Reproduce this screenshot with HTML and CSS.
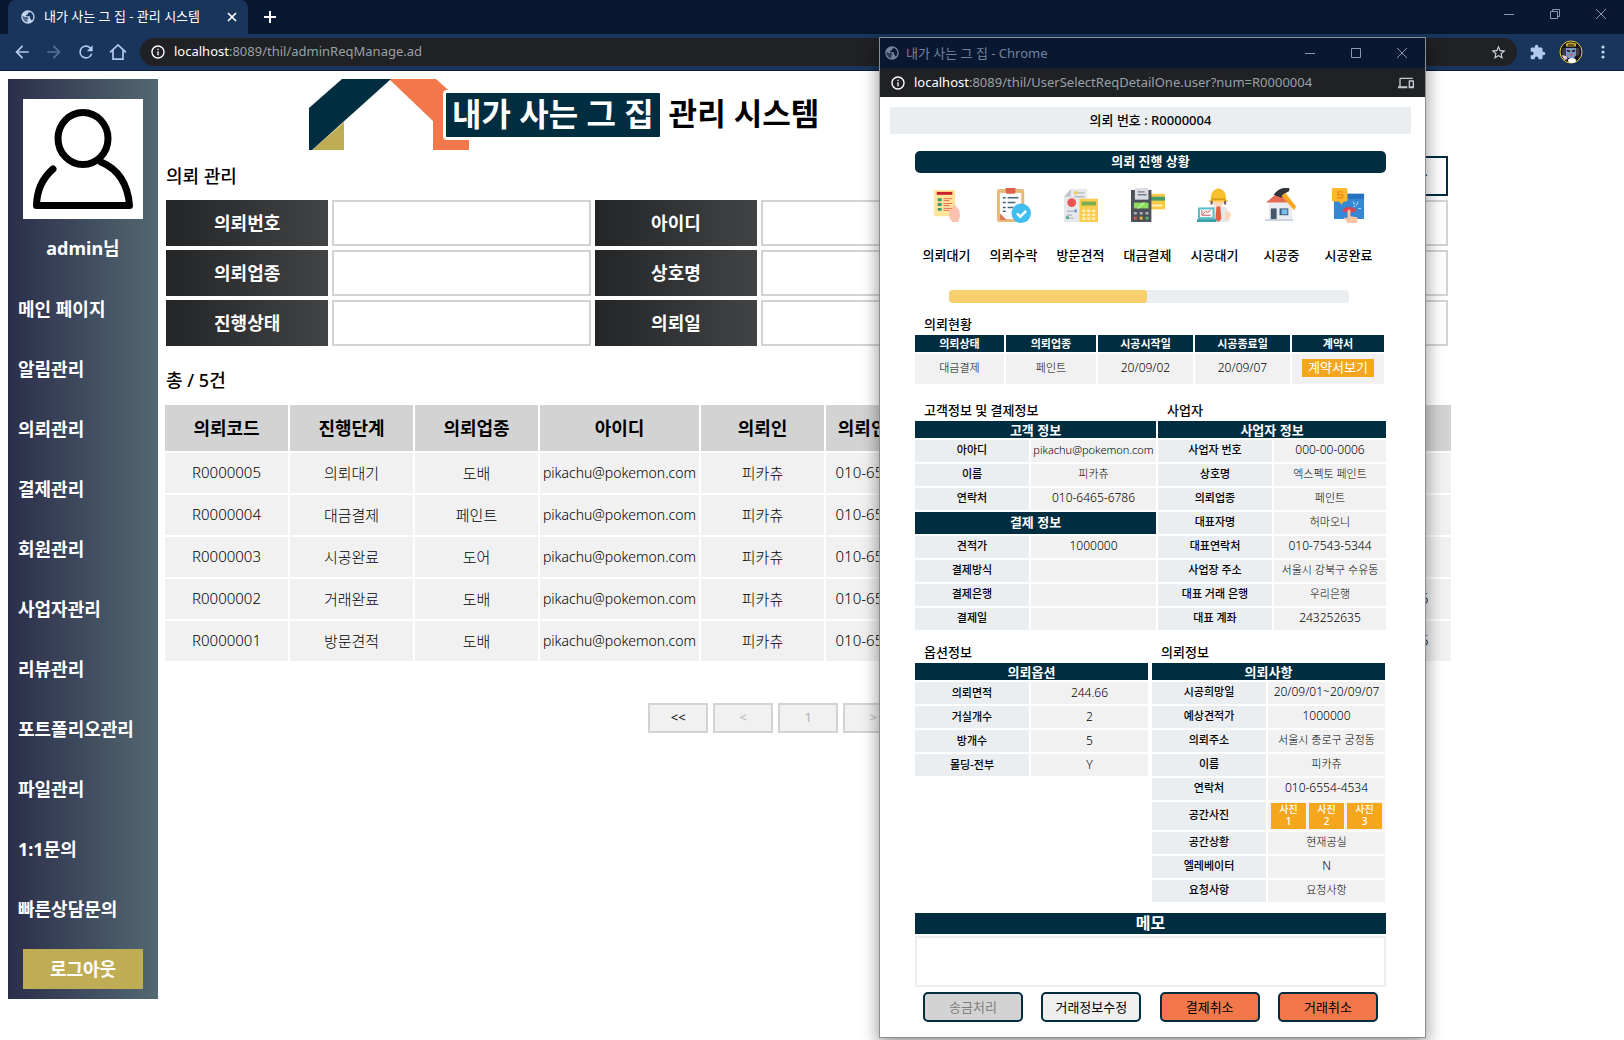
FILE: index.html
```html
<!DOCTYPE html>
<html lang="ko">
<head>
<meta charset="utf-8">
<title>내가 사는 그 집 - 관리 시스템</title>
<link rel="stylesheet" href="styles.css">
</head>
<body>
<svg class="defs" aria-hidden="true">
  <symbol id="globe" viewBox="0 0 24 24"><path d="M12 2C6.48 2 2 6.48 2 12s4.48 10 10 10 10-4.48 10-10S17.52 2 12 2zm-1 17.93c-3.95-.49-7-3.85-7-7.93 0-.62.08-1.21.21-1.79L7 12h4l2 2-2 2v3.93zm6.9-2.54L15 14v-3H9V9l3-1V6l3-1.4c2.93 1.19 5 4.06 5 7.4 0 2.08-.8 3.97-2.1 5.39z"/><path d="M4 9l3 3h5l2 3-3 5C6 20 3 16 4 9z" opacity=".35"/></symbol>
  <symbol id="info" viewBox="0 0 24 24"><path d="M11 17h2v-6h-2v6zm1-15C6.48 2 2 6.48 2 12s4.48 10 10 10 10-4.48 10-10S17.52 2 12 2zm0 18a8 8 0 1 1 0-16 8 8 0 0 1 0 16zM11 9h2V7h-2v2z"/></symbol>
</svg>

<header class="browser">
  <div class="tabstrip">
    <div class="tab">
      <svg class="tab-icon"><use href="#globe"/></svg>
      <span class="tab-title">내가 사는 그 집 - 관리 시스템</span>
      <button class="icon-btn tab-close" aria-label="탭 닫기"><svg width="10" height="10" viewBox="0 0 10 10"><path d="M1 1l8 8M9 1L1 9" stroke="#fff" stroke-width="1.7"/></svg></button>
    </div>
    <button class="icon-btn" aria-label="새 탭"><svg width="12" height="12" viewBox="0 0 12 12"><path d="M6 0v12M0 6h12" stroke="#fff" stroke-width="2"/></svg></button>
    <div class="win-controls main-controls">
      <button class="icon-btn" aria-label="최소화"><svg width="10" height="10" viewBox="0 0 10 10"><path d="M0 5.500h10"/></svg></button>
      <button class="icon-btn" aria-label="이전 크기로"><svg width="10" height="10" viewBox="0 0 10 10"><path d="M.5 2.500h7v7h-7zM2.500 2.500v-2h7v7h-2"/></svg></button>
      <button class="icon-btn" aria-label="닫기"><svg width="10" height="10" viewBox="0 0 10 10"><path d="M0 0l10 10M10 0L0 10"/></svg></button>
    </div>
  </div>
  <div class="toolbar">
    <button class="icon-btn nav" aria-label="뒤로"><svg viewBox="0 0 24 24"><path d="M20 11H7.830l5.590-5.590L12 4l-8 8 8 8 1.410-1.410L7.830 13H20v-2z"/></svg></button>
    <button class="icon-btn nav off" aria-label="앞으로" disabled><svg viewBox="0 0 24 24"><path d="M4 11h12.170l-5.590-5.590L12 4l8 8-8 8-1.410-1.410L16.170 13H4v-2z"/></svg></button>
    <button class="icon-btn nav" aria-label="새로고침"><svg viewBox="0 0 24 24"><path d="M17.650 6.350A7.960 7.960 0 0 0 12 4a8 8 0 1 0 7.730 10h-2.080A6 6 0 1 1 12 6c1.660 0 3.140.69 4.220 1.780L13 11h7V4l-2.350 2.350z"/></svg></button>
    <button class="icon-btn nav" aria-label="홈"><svg viewBox="0 0 24 24"><path d="M2.500 12.500L12 3.500l9.500 9M6 10v10.500h12V10" fill="none" stroke="#b4c9ee" stroke-width="2"/></svg></button>
    <div class="omnibox">
      <svg class="info"><use href="#info"/></svg>
      <span class="url"><b>localhost</b>:8089/thil/adminReqManage.ad</span>
      <button class="icon-btn star" aria-label="북마크"><svg width="17" height="17" viewBox="0 0 24 24"><path d="M22 9.240l-7.190-.62L12 2 9.190 8.630 2 9.240l5.460 4.730L5.820 21 12 17.270 18.180 21l-1.630-7.030L22 9.240zM12 15.400l-3.760 2.270 1-4.280-3.320-2.880 4.380-.38L12 6.100l1.710 4.040 4.380.38-3.320 2.880 1 4.280L12 15.400z"/></svg></button>
    </div>
    <button class="icon-btn ext" aria-label="확장 프로그램"><svg width="16" height="16" viewBox="1 0 23 23"><path d="M20.500 11H19V7c0-1.100-.9-2-2-2h-4V3.500a2.500 2.500 0 0 0-5 0V5H4c-1.100 0-2 .9-2 2v3.800h1.500c1.490 0 2.700 1.210 2.700 2.700s-1.210 2.700-2.700 2.700H2V20c0 1.100.9 2 2 2h3.800v-1.500c0-1.490 1.210-2.700 2.700-2.700s2.700 1.210 2.700 2.700V22H17c1.100 0 2-.9 2-2v-4h1.500a2.500 2.500 0 0 0 0-5z"/></svg></button>
    <button class="icon-btn" aria-label="프로필"><svg width="24" height="24" viewBox="0 0 24 24"><circle cx="12" cy="12" r="11" fill="#14141c" stroke="#e6cf3c" stroke-width="1"/><path d="M7 3.500q5-2 10 0v3H7z" fill="#c9a82a"/><path d="M9 5h6" stroke="#4a3c14" stroke-width="1.500"/><path d="M7 8h10l1 6-3 4H9l-3-4z" fill="#7c97bd"/><path d="M4 8q-2 5 1 8l2-1V8zM20 8q2 5-1 8l-2-1V8z" fill="#3a3c46"/><path d="M8 10.500l3 1M16 10.500l-3 1" stroke="#14141c" stroke-width="1.500"/><path d="M10 14h4l-2 2z" fill="#c8506a"/><path d="M2.500 15l5 1 1 3-3 1z" fill="#e8c8c8"/><ellipse cx="13" cy="20.500" rx="4" ry="2.500" fill="#fff"/></svg></button>
    <button class="icon-btn menu" aria-label="메뉴"><svg width="4" height="14" viewBox="0 0 4 14"><circle cx="2" cy="2" r="1.600"/><circle cx="2" cy="7" r="1.600"/><circle cx="2" cy="12" r="1.600"/></svg></button>
  </div>
</header>

<div class="page">
  <nav class="sidebar">
    <div class="photo"><svg viewBox="0 0 120 120"><g fill="none" stroke="#000" stroke-width="7" stroke-linecap="round" stroke-linejoin="round"><ellipse cx="60" cy="39.500" rx="25" ry="26"/><path d="M30 70Q14 84 13.500 106.500h93Q104 74 78 63"/></g></svg></div>
    <p class="admin">admin님</p>
    <ul>
      <li><a href="#">메인 페이지</a></li>
      <li><a href="#">알림관리</a></li>
      <li><a href="#">의뢰관리</a></li>
      <li><a href="#">결제관리</a></li>
      <li><a href="#">회원관리</a></li>
      <li><a href="#">사업자관리</a></li>
      <li><a href="#">리뷰관리</a></li>
      <li><a href="#">포트폴리오관리</a></li>
      <li><a href="#">파일관리</a></li>
      <li><a href="#">1:1문의</a></li>
      <li><a href="#">빠른상담문의</a></li>
    </ul>
    <button class="logout">로그아웃</button>
  </nav>

  <main class="main">
    <div class="logo">
      <svg width="160" height="71" viewBox="0 0 160 71"><path d="M3 71L35 43v28z" fill="#bfad55"/><path d="M80 0h47l21 19v52h-24V42z" fill="#f2784b"/><path d="M124 60h36v11h-36z" fill="#f2784b"/><path d="M0 29L33 0h49L3 71H0z" fill="#002d40"/></svg>
      <span class="logo-name">내가 사는 그 집</span>
      <span class="logo-sub">관리 시스템</span>
    </div>
    <div class="head">
      <h2>의뢰 관리</h2>
      <button class="reset">초기화</button>
    </div>
    <form class="search">
      <label for="s1">의뢰번호</label><input id="s1" type="text">
      <label for="s2">아이디</label><input id="s2" type="text">
      <label for="s3"></label><input id="s3" type="text">
      <label for="s4">의뢰업종</label><input id="s4" type="text">
      <label for="s5">상호명</label><input id="s5" type="text">
      <label for="s6"></label><input id="s6" type="text">
      <label for="s7">진행상태</label><input id="s7" type="text">
      <label for="s8">의뢰일</label><input id="s8" type="text">
      <label for="s9"></label><input id="s9" type="text">
    </form>
    <h2 class="count">총 / 5건</h2>
    <table class="list">
      <colgroup><col class="c"><col class="c"><col class="c"><col class="mail"><col class="c"><col class="c"><col><col><col><col></colgroup>
      <thead><tr><th>의뢰코드</th><th>진행단계</th><th>의뢰업종</th><th>아이디</th><th>의뢰인</th><th>의뢰인연락처</th><th></th><th></th><th></th><th></th></tr></thead>
      <tbody>
        <tr><td>R0000005</td><td>의뢰대기</td><td>도배</td><td class="mail">pikachu@pokemon.com</td><td>피카츄</td><td>010-6554-4534</td><td></td><td></td><td></td><td></td></tr>
        <tr><td>R0000004</td><td>대금결제</td><td>페인트</td><td class="mail">pikachu@pokemon.com</td><td>피카츄</td><td>010-6554-4534</td><td></td><td></td><td></td><td></td></tr>
        <tr><td>R0000003</td><td>시공완료</td><td>도어</td><td class="mail">pikachu@pokemon.com</td><td>피카츄</td><td>010-6554-4534</td><td></td><td></td><td></td><td></td></tr>
        <tr><td>R0000002</td><td>거래완료</td><td>도배</td><td class="mail">pikachu@pokemon.com</td><td>피카츄</td><td>010-6554-4534</td><td></td><td></td><td></td><td>2020-08-25</td></tr>
        <tr><td>R0000001</td><td>방문견적</td><td>도배</td><td class="mail">pikachu@pokemon.com</td><td>피카츄</td><td>010-6554-4534</td><td></td><td></td><td></td><td>2020-08-25</td></tr>
      </tbody>
    </table>
    <div class="pager">
      <button>&lt;&lt;</button><button disabled>&lt;</button><button disabled>1</button><button disabled>&gt;</button><button>&gt;&gt;</button>
    </div>
  </main>
</div>

<section class="popup">
  <div class="pop-title">
    <svg class="tab-icon"><use href="#globe"/></svg>
    <span>내가 사는 그 집 - Chrome</span>
    <div class="win-controls pop-controls">
      <button class="icon-btn" aria-label="최소화"><svg width="10" height="10" viewBox="0 0 10 10"><path d="M0 5.500h10"/></svg></button>
      <button class="icon-btn" aria-label="최대화"><svg width="10" height="10" viewBox="0 0 10 10"><path d="M.5.5h9v9h-9z"/></svg></button>
      <button class="icon-btn" aria-label="닫기"><svg width="10" height="10" viewBox="0 0 10 10"><path d="M0 0l10 10M10 0L0 10"/></svg></button>
    </div>
  </div>
  <div class="pop-url">
    <svg class="info"><use href="#info"/></svg>
    <span class="url"><b>localhost</b>:8089/thil/UserSelectReqDetailOne.user?num=R0000004</span>
    <svg class="devices" viewBox="0 0 24 24"><path d="M4 6h18V4H4c-1.100 0-2 .9-2 2v11H0v3h14v-3H4V6zm19 2h-6c-.55 0-1 .45-1 1v10c0 .55.45 1 1 1h6c.55 0 1-.45 1-1V9c0-.55-.45-1-1-1zm-1 9h-4v-7h4v7z"/></svg>
  </div>
  <div class="pop-body">
    <h1>의뢰 번호 : R0000004</h1>
    <div class="detail">
      <h2 class="status-title">의뢰 진행 상황</h2>
      <ol class="steps">
        <li><svg viewBox="0 0 36 36"><path d="M5 2h22v27H5z" fill="#fde59a"/><path d="M8 4h16v3H8z" fill="#c8202c"/><path d="M9 10.500h4v3H9zM9 15.500h4v3H9zM9 20.500h4v3H9z" fill="#3c9a78"/><path d="M15 11h9M15 13h6M15 16h9M15 18h6M15 21h9M15 23h6" stroke="#e2685a"/><path d="M21 24q1-3 3-2l1 1-1-5q2-2 4 1l3 4 1 6-2 6h-6l-3-5z" fill="#fdbfae"/></svg>의뢰대기</li>
        <li><svg viewBox="0 0 36 36"><path d="M1 3q0-2 2-2h24q2 0 2 2v30q0 2-2 2H3q-2 0-2-2z" fill="#e8b878"/><path d="M4 5h22v27H4z" fill="#fbfbfd"/><path d="M10 0h10v4q0 2-2 2h-6q-2 0-2-2z" fill="#e0604c"/><path d="M4 26l7 7H4z" fill="#e2785a"/><path d="M7 10h3M12 10h11M7 15h3M12 15h8M7 20h3M12 20h6M7 24h3" stroke="#4a6478" stroke-width="1.500"/><circle cx="26" cy="26" r="10" fill="#42bdf0"/><path d="M21.500 26l3.500 3.500 6-6" fill="none" stroke="#fff" stroke-width="2.500"/></svg>의뢰수락</li>
        <li><svg viewBox="0 0 36 36"><path d="M8 1h17v34H1V9z" fill="#e6e8ec"/><path d="M1 9l7-8v8z" fill="#bfc3cc"/><circle cx="13" cy="5" r="2" fill="#f4cc50"/><path d="M15 5h7M12 9h10" stroke="#b4b8c0" stroke-width="1.500"/><circle cx="9" cy="15" r="4.500" fill="#ea5454"/><path d="M4 24h8M4 28h5M4 31h7" stroke="#b4b8c0" stroke-width="1.500"/><path d="M12 22h2v3h-2z" fill="#5090c8"/><path d="M3 29h3v3H3z" fill="#60a888"/><path d="M17 11h19v24H17z" fill="#f8cd50"/><path d="M19 14h15v4H19z" fill="#78ad50"/><path d="M20 23.500h13M20 27.500h13M20 31.500h13" stroke="#fff5cc" stroke-width="2.200" stroke-dasharray="3 2"/></svg>방문견적</li>
        <li><svg viewBox="0 0 36 36"><path d="M17 6h19v16H17z" fill="#f8c94c"/><path d="M20 9h16v4H20z" fill="#4a9a66"/><path d="M22 17h11v2H22z" fill="#fff2bd"/><path d="M1 2h21v33H1z" fill="#4c5058"/><path d="M5 0h14v12H5z" fill="#dadce2"/><path d="M8 4h7M8 7h9" stroke="#777f8b" stroke-width="1.500"/><path d="M4 15h15v6H4z" fill="#8fdd60"/><path d="M13 15l3 0-7 6H7z" fill="#b9ee96"/><path d="M4 26h15" stroke="#abb1ba" stroke-width="2.500" stroke-dasharray="3"/><path d="M4 31h3" stroke="#e05048" stroke-width="3"/><path d="M10 31h3" stroke="#f0b83c" stroke-width="3"/><path d="M16 31h3" stroke="#50b468" stroke-width="3"/></svg>대금결제</li>
        <li><svg viewBox="0 0 36 36"><path d="M14 20q8-4 16 0l4 8-1 7H17z" fill="#e6e6ec"/><ellipse cx="22" cy="14" rx="6" ry="5" fill="#fbd7b6"/><path d="M14 12q0-8 4-10 4-3 8 0 4 2 4 10l2 1v1H12v-1z" fill="#f8c02c"/><path d="M15 11.500h14" stroke="#d79b18" stroke-width="1.500"/><path d="M14 13h2v4h-2zM28 13h2v4h-2z" fill="#5c5058"/><path d="M20 19h4l1 13-3 3-3-3z" fill="#e2603c"/><path d="M30 24q5 0 5 4l-3 5-4-2z" fill="#fbd7b6"/><path d="M1 20h17v12H1z" fill="#58bdc4"/><path d="M3 22h13v8H3z" fill="#f6f6f8"/><path d="M5 28V23M5 28h9M6 27l3-3 2 1 3-2" fill="none" stroke="#c05b56"/><path d="M0 32h20v3H0z" fill="#3aa0ac"/></svg>시공대기</li>
        <li><svg viewBox="0 0 36 36"><path d="M5 15h24v18H5z" fill="#e9ecf1"/><path d="M2 15L15 4l12 11z" fill="#e46a54"/><path d="M1 32h29v2H1z" fill="#ccd2dc"/><path d="M7 21h6v11H7z" fill="#44586a"/><path d="M16 21h9v7h-9z" fill="#3f5a78"/><path d="M18 22h6v5h-6z" fill="#70c4ee"/><path d="M10 7Q15 0 21 0h5v3l-5 3-3 4z" fill="#30343a"/><path d="M18 8l4-3 11 14-2 4z" fill="#f7a823"/></svg>시공중</li>
        <li><svg viewBox="0 0 36 36"><path d="M3 6h31v25q0 1-1 1H4q-1 0-1-1z" fill="#3588d4"/><path d="M3 6h31v5H3z" fill="#2670bd"/><path d="M12 22q6-5 14 0v2q-7 3-14 0z" fill="#d84654"/><path d="M17 23q2-2 3 0v6l7 1v6H17l-4-6 4 1z" fill="#fcc3a2"/><path d="M23 14l1 3M28 14l-2 4M28 21h3M23 19h2" stroke="#c6e4ff"/><path d="M2 0h13q2 0 2 2v10q0 2-2 2h-2l-2 3-3-3H3q-2 0-2-2V2q0-2 1-2z" fill="#fdb82c"/><path d="M12 4H7v3h5v3H6" fill="none" stroke="#ea8d16" stroke-width="1.500"/></svg>시공완료</li>
      </ol>
      <div class="progress" role="progressbar" aria-valuenow="49"><div style="width:49.5%"></div></div>

      <h3>의뢰현황</h3>
      <table class="info-table status">
        <colgroup><col class="w89"><col class="w90"><col class="w95"><col class="w95"><col></colgroup>
        <thead><tr><th>의뢰상태</th><th>의뢰업종</th><th>시공시작일</th><th>시공종료일</th><th>계약서</th></tr></thead>
        <tbody><tr><td>대금결제</td><td>페인트</td><td class="num">20/09/02</td><td class="num">20/09/07</td><td><button class="contract">계약서보기</button></td></tr></tbody>
      </table>

      <div class="pair people">
        <div>
          <h3>고객정보 및 결제정보</h3>
          <table class="info-table kv">
            <colgroup><col class="key"><col></colgroup>
            <thead><tr><th colspan="2">고객 정보</th></tr></thead>
            <tbody>
              <tr><th>아아디</th><td>pikachu@pokemon.com</td></tr>
              <tr><th>이름</th><td>피카츄</td></tr>
              <tr><th>연락처</th><td class="num">010-6465-6786</td></tr>
              <tr class="bar"><th colspan="2">결제 정보</th></tr>
              <tr><th>견적가</th><td class="num">1000000</td></tr>
              <tr><th>결제방식</th><td></td></tr>
              <tr><th>결제은행</th><td></td></tr>
              <tr><th>결제일</th><td></td></tr>
            </tbody>
          </table>
        </div>
        <div>
          <h3>사업자</h3>
          <table class="info-table kv">
            <colgroup><col class="key"><col></colgroup>
            <thead><tr><th colspan="2">사업자 정보</th></tr></thead>
            <tbody>
              <tr><th>사업자 번호</th><td class="num">000-00-0006</td></tr>
              <tr><th>상호명</th><td>엑스펙토 페인트</td></tr>
              <tr><th>의뢰업종</th><td>페인트</td></tr>
              <tr><th>대표자명</th><td>허마오니</td></tr>
              <tr><th>대표연락처</th><td class="num">010-7543-5344</td></tr>
              <tr><th>사업장 주소</th><td>서울시 강북구 수유동</td></tr>
              <tr><th>대표 거래 은행</th><td>우리은행</td></tr>
              <tr><th>대표 계좌</th><td class="num">243252635</td></tr>
            </tbody>
          </table>
        </div>
      </div>

      <div class="pair request">
        <div>
          <h3>옵션정보</h3>
          <table class="info-table kv options">
            <colgroup><col class="key"><col></colgroup>
            <thead><tr><th colspan="2">의뢰옵션</th></tr></thead>
            <tbody>
              <tr><th>의뢰면적</th><td class="num">244.66</td></tr>
              <tr><th>거실개수</th><td class="num">2</td></tr>
              <tr><th>방개수</th><td class="num">5</td></tr>
              <tr><th>몰딩-전부</th><td class="num">Y</td></tr>
            </tbody>
          </table>
        </div>
        <div>
          <h3>의뢰정보</h3>
          <table class="info-table kv">
            <colgroup><col class="key"><col></colgroup>
            <thead><tr><th colspan="2">의뢰사항</th></tr></thead>
            <tbody>
              <tr><th>시공희망일</th><td class="num">20/09/01~20/09/07</td></tr>
              <tr><th>예상견적가</th><td class="num">1000000</td></tr>
              <tr><th>의뢰주소</th><td>서울시 종로구 궁정동</td></tr>
              <tr><th>이름</th><td>피카츄</td></tr>
              <tr><th>연락처</th><td class="num">010-6554-4534</td></tr>
              <tr><th>공간사진</th><td class="photo-cell"><div class="photos"><button>사진<br>1</button><button>사진<br>2</button><button>사진<br>3</button></div></td></tr>
              <tr><th>공간상황</th><td>현재공실</td></tr>
              <tr><th>엘레베이터</th><td class="num">N</td></tr>
              <tr><th>요청사항</th><td>요청사항</td></tr>
            </tbody>
          </table>
        </div>
      </div>

      <label class="memo-label" for="memo">메모</label>
      <textarea id="memo" class="memo"></textarea>
      <div class="actions">
        <button disabled>송금처리</button>
        <button>거래정보수정</button>
        <button class="cancel">결제취소</button>
        <button class="cancel">거래취소</button>
      </div>
    </div>
  </div>
</section>
</body>
</html>
```

FILE: styles.css
```css
* { box-sizing: border-box; }

body {
  margin: 0;
  min-height: 100vh;
  background: #fff;
  color: #000;
  font-family: "Noto Sans", "Noto Sans CJK KR", sans-serif;
  position: relative;
  overflow: hidden;
}

h1, h2, h3, p, ul, ol { margin: 0; padding: 0; }
ul, ol { list-style: none; }
button, input, textarea { font-family: inherit; margin: 0; }
button { padding: 0 0 2px; }
.defs { display: none; }

/* Browser frame */
.icon-btn {
  border: 0;
  padding: 0;
  background: none;
  display: flex;
  align-items: center;
  justify-content: center;
}
.tabstrip {
  height: 34px;
  background: #081831;
  display: flex;
  align-items: center;
  padding-left: 8px;
}
.tab {
  width: 240px;
  height: 34px;
  background: #1a355c;
  border-radius: 8px 8px 0 0;
  display: flex;
  align-items: center;
  padding: 0 11px 0 12px;
  margin-right: 16px;
}
.tab-icon { width: 16px; height: 16px; fill: #c3d3ee; }
.tab-title {
  flex: 1;
  margin-left: 8px;
  padding-bottom: 2px;
  font-size: 13px;
  line-height: 20px;
  color: #fff;
  white-space: nowrap;
}
.win-controls { display: flex; margin-left: auto; }
.win-controls .icon-btn { width: 46px; height: 28px; }
.win-controls path { stroke: #8a98ad; fill: none; }
.main-controls { align-self: flex-start; }
.toolbar {
  height: 37px;
  background: #1a355c;
  border-bottom: 1px solid #0c1c38;
  display: flex;
  align-items: center;
  padding: 0 19px 0 12px;
}
.nav { margin-right: 12px; }
.nav svg { width: 20px; height: 20px; fill: #b4c9ee; }
.nav.off { opacity: .4; }
.omnibox {
  flex: 1;
  height: 28px;
  border-radius: 14px;
  background: #202124;
  display: flex;
  align-items: center;
  padding: 0 10px;
}
.info { width: 16px; height: 16px; fill: #fff; }
.url {
  margin-left: 8px;
  padding-bottom: 2px;
  font-size: 13px;
  line-height: 20px;
  color: #9aa0a6;
  white-space: nowrap;
}
.url b { color: #fff; font-weight: 400; }
.star { margin-left: auto; }
.star svg { fill: #d0d6e0; }
.ext { margin-left: 13px; margin-right: 13px; }
.ext svg { fill: #b4c9ee; }
.menu { margin-left: 18px; }
.menu svg { fill: #c3d3ee; }

/* Admin page */
.page { display: flex; align-items: flex-start; padding: 8px; }
.sidebar {
  flex: none;
  width: 150px;
  padding: 20px 0 10px;
  background: linear-gradient(to right, #2b2e4a, #536872);
  font-size: 18px;
  font-weight: 700;
  color: #fff;
  margin-right: 7px;
}
.photo { width: 120px; height: 120px; margin: 0 auto; background: #fff; }
.admin { height: 60px; line-height: 58px; text-align: center; }
.sidebar a {
  display: block;
  height: 60px;
  line-height: 60px;
  padding-left: 10px;
  color: #fff;
  text-decoration: none;
}
.logout {
  display: block;
  width: 120px;
  height: 40px;
  margin: 10px auto 0;
  border: 0;
  background: #bfad55;
  color: #fff;
  font-size: 18px;
  font-weight: 700;
}
.main { width: 80%; }
.logo { display: flex; align-items: center; height: 71px; padding-left: 144px; }
.logo-name {
  height: 50px;
  margin-left: -26px;
  padding: 0 6px;
  border: 3px solid #fff;
  border-radius: 4px;
  background: #002d40;
  color: #fff;
  font-size: 32px;
  font-weight: 700;
  line-height: 42px;
}
.logo-sub { margin: 0 0 6px 6px; font-size: 31px; font-weight: 700; }
.head { display: flex; justify-content: space-between; margin: 6px 3px 4px 1px; }
.head h2, .count { height: 40px; font-size: 18px; font-weight: 500; line-height: 40px; }
.reset {
  width: 92px;
  height: 40px;
  border: 2px solid #002d40;
  background: #fff;
  font-size: 18px;
  font-weight: 500;
}
.search {
  display: grid;
  grid-template-columns: repeat(3, 162fr 258fr);
  grid-auto-rows: 46px;
  gap: 4px;
  margin: 0 3px 0 1px;
}
.search label {
  display: flex;
  align-items: center;
  justify-content: center;
  padding-bottom: 2px;
  background: linear-gradient(to right, #232526, #414345);
  color: #fff;
  font-size: 18px;
  font-weight: 700;
}
.search input { width: 100%; min-width: 0; border: 2px solid #d3d3d3; background: #fff; }
.count { margin: 14px 0 3px 1px; }
.list {
  table-layout: fixed;
  width: calc(100% + 4px);
  margin: 0 -2px;
  border-spacing: 2px;
  text-align: center;
}
.list .c { width: 123px; }
.list col.mail { width: 159px; }
.list th, .list td { padding: 0 0 2px; white-space: nowrap; }
.list th { height: 46px; background: #d3d3d3; font-size: 18px; font-weight: 700; }
.list td { height: 40px; background: #f1f1f1; font-size: 15px; font-weight: 300; }
.list td.mail { font-size: 14px; }
.pager { display: flex; justify-content: center; gap: 5px; margin-top: 40px; }
.pager button {
  width: 60px;
  height: 30px;
  border: 2px solid #d3d3d3;
  background: #f1f1f1;
  color: #000;
  font-size: 13px;
}
.pager button:disabled { color: #b4b4b4; }

/* Detail window, floating over the page */
.popup {
  position: absolute;
  left: 880px;
  top: 38px;
  width: 545px;
  background: #fff;
  box-shadow: 0 0 0 1px #8a8d92, 0 6px 16px 2px rgba(0, 0, 0, .4);
}
.pop-title {
  height: 30px;
  background: #081831;
  display: flex;
  align-items: center;
  padding-left: 4px;
  color: #75829a;
  font-size: 13px;
  gap: 6px;
}
.pop-title span { padding-bottom: 2px; }
.pop-title .tab-icon { fill: #75829a; }
.pop-url {
  height: 29px;
  background: #202124;
  display: flex;
  align-items: center;
  padding: 0 11px 0 10px;
}
.devices { width: 16px; height: 16px; fill: #c8ccd2; margin-left: auto; }
.pop-body { padding: 10px 14px 15px 10px; }
.pop-body h1 {
  height: 27px;
  background: #ebeef1;
  font-size: 13px;
  font-weight: 500;
  line-height: 27px;
  text-align: center;
}
.detail { margin: 17px 25px 0; }
.status-title {
  height: 22px;
  border-radius: 5px;
  background: #002d40;
  color: #fff;
  font-size: 13px;
  font-weight: 700;
  line-height: 20px;
  text-align: center;
}
.steps {
  display: grid;
  grid-template-columns: repeat(7, 1fr);
  margin: 15px 4px 0 -2px;
  text-align: center;
  font-size: 13px;
  font-weight: 500;
  line-height: 20px;
}
.steps svg { display: block; width: 35px; height: 35px; margin: 0 auto 22px; }
.progress {
  height: 13px;
  margin: 25px 37px 12px 34px;
  border-radius: 3px;
  background: #ebeef1;
  overflow: hidden;
}
.progress div { height: 100%; border-radius: 3px; background: #f6d06f; }
h3 { height: 20px; padding-left: 9px; font-size: 13px; font-weight: 500; line-height: 18px; }
.info-table {
  table-layout: fixed;
  width: calc(100% + 4px);
  margin: -2px -2px 0;
  border-spacing: 2px;
  text-align: center;
  font-size: 11px;
  line-height: 16px;
}
.info-table th, .info-table td { padding: 0; white-space: nowrap; }
.info-table thead th { height: 17px; }
.info-table thead th, .info-table .bar th { background: #002d40; color: #fff; font-weight: 700; }
.info-table td { background: #f1f1f1; font-weight: 300; }
.info-table td.num { font-size: 12px; }
.status { width: calc(100% + 2px); }
.status td { height: 30px; padding-bottom: 2px; }
.w89 { width: 89px; }
.w90 { width: 90px; }
.w95 { width: 95px; }
.contract {
  width: 72px;
  height: 18px;
  border: 0;
  background: #f4a71d;
  color: #fff;
  font-size: 13px;
  line-height: 16px;
}
.kv thead th, .kv .bar th { font-size: 13px; }
.kv tbody th, .kv tbody td { height: 22px; padding-bottom: 3px; }
.kv tbody th { background: #ebeef1; font-weight: 500; }
.kv .key { width: 114px; }
.pair { display: grid; }
.pair > div { min-width: 0; }
.people { grid-template-columns: 241fr 228fr; gap: 2px; margin-top: 15px; }
.request { grid-template-columns: 1fr 1fr; gap: 4px; margin: 11px 1px 0 0; }
.options tbody th, .options tbody td { padding-bottom: 0; }
.kv tbody td.photo-cell { padding: 0; }
.photos { display: flex; justify-content: center; gap: 3px; padding: 1px 0; }
.photos button {
  width: 35px;
  height: 26px;
  border: 0;
  background: #f4a71d;
  color: #fff;
  font-size: 10px;
  font-weight: 500;
  line-height: 12px;
}
.memo-label {
  display: block;
  height: 21px;
  margin-top: 9px;
  background: #002d40;
  color: #fff;
  font-size: 16px;
  font-weight: 700;
  line-height: 20px;
  text-align: center;
}
.memo {
  display: block;
  width: 100%;
  height: 51px;
  margin-top: 2px;
  border: 2px solid #ededef;
  resize: none;
}
.actions { display: flex; justify-content: space-between; margin: 5px 8px 0; }
.actions button {
  width: 100px;
  height: 30px;
  border: 2px solid #002d40;
  border-radius: 5px;
  background: #efefef;
  color: #000;
  font-size: 13px;
}
.actions button:disabled { background: #d3d3d3; color: #808080; }
.actions .cancel { background: #f2784b; }
```
